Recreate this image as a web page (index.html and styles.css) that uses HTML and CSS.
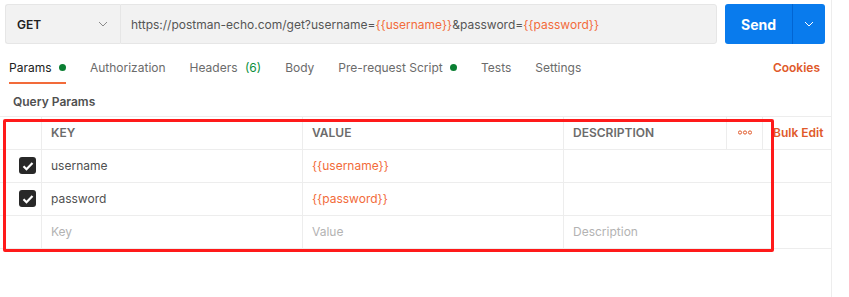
FILE: index.html
```html
<!DOCTYPE html>
<html>
<head>
    <title>Postman request</title>
    <link rel="stylesheet" href="styles.css">
</head>
<body>
<div class="pane">
    <div class="request-bar">
        <div class="method">
            <span>GET</span>
            <svg width="10" height="6" viewBox="0 0 10 6"><path d="M1 1l4 4 4-4" fill="none" stroke="#8a8a8a" stroke-width="1"/></svg>
        </div>
        <div class="url">https://postman-echo.com/get?username=<span class="var">{{username}}</span>&amp;password=<span class="var">{{password}}</span></div>
        <div class="send">
            <span class="send-txt">Send</span>
            <span class="send-more"><svg width="10" height="6" viewBox="0 0 10 6"><path d="M1 1l4 4 4-4" fill="none" stroke="#fff" stroke-width="1"/></svg></span>
        </div>
    </div>

    <div class="tabs">
        <span class="tab active">Params <i class="dot"></i></span>
        <span class="tab">Authorization</span>
        <span class="tab">Headers <em>(6)</em></span>
        <span class="tab">Body</span>
        <span class="tab">Pre-request Script <i class="dot"></i></span>
        <span class="tab">Tests</span>
        <span class="tab">Settings</span>
        <span class="cookies">Cookies</span>
    </div>

    <div class="section-tit">Query Params</div>

    <div class="params">
        <div class="row head">
            <div class="cell"></div>
            <div class="cell">KEY</div>
            <div class="cell">VALUE</div>
            <div class="cell">DESCRIPTION</div>
            <div class="cell more"><svg width="14" height="5" viewBox="0 0 14 5"><circle cx="2" cy="2.5" r="1.6"/><circle cx="7" cy="2.5" r="1.6"/><circle cx="12" cy="2.5" r="1.6"/></svg></div>
            <div class="cell bulk">Bulk Edit</div>
        </div>
        <div class="row">
            <div class="cell ck"><span class="box"><svg width="12" height="10" viewBox="0 0 12 10"><path d="M1.5 5.2l3 3 6-6.2" fill="none" stroke="#fff" stroke-width="2.2"/></svg></span></div>
            <div class="cell">username</div>
            <div class="cell var">{{username}}</div>
            <div class="cell"></div>
        </div>
        <div class="row">
            <div class="cell ck"><span class="box"><svg width="12" height="10" viewBox="0 0 12 10"><path d="M1.5 5.2l3 3 6-6.2" fill="none" stroke="#fff" stroke-width="2.2"/></svg></span></div>
            <div class="cell">password</div>
            <div class="cell var">{{password}}</div>
            <div class="cell"></div>
        </div>
        <div class="row">
            <div class="cell"></div>
            <div class="cell ph">Key</div>
            <div class="cell ph">Value</div>
            <div class="cell ph">Description</div>
        </div>
        <div class="mark"></div>
    </div>
</div>
</body>
</html>
```

FILE: styles.css
```css
body{ margin: 0;background: #FFF;font-family: Inter, "Open Sans", sans-serif;font-size: 12px;color: #505050;}
.pane{ width: 832px;height: 297px;border-right: solid 1px #EDEDED;box-sizing: border-box;}
.request-bar{ display: flex;padding: 4px 0 0 5px;height: 40px;}
.method{ width: 115px;box-sizing: border-box;display: flex;align-items: center;justify-content: space-between;padding: 0 12px 0 11px;background: #F2F2F2;border: solid 1px #E6E6E6;border-right: none;border-radius: 3px 0 0 3px;}
.method span{ font-weight: 600;font-size: 12px;color: #212121;}
.url{ width: 597px;box-sizing: border-box;display: flex;align-items: center;padding-left: 10px;background: #F2F2F2;border: solid 1px #E6E6E6;border-radius: 0 3px 3px 0;color: #555;white-space: pre;}
.var{ color: #F26B3A;}
.send{ margin-left: 8px;width: 100px;display: flex;background: #097BED;border-radius: 3px;color: #FFF;}
.send-txt{ width: 67px;display: flex;align-items: center;justify-content: center;font-weight: 700;font-size: 14px;border-right: solid 1px #0265D2;}
.send-more{ flex: 1;display: flex;align-items: center;justify-content: center;}
.tabs{ display: flex;align-items: stretch;height: 36px;margin-top: 4px;padding-left: 9px;}
.tab{ margin-right: 24px;color: #6B6B6B;box-sizing: border-box;display: flex;align-items: center;gap: 4px;white-space: pre;padding-top: 4px;border-bottom: solid 2px transparent;}
.tab.active{ color: #212121;border-bottom-color: #F26B3A;}
.tab em{ font-style: normal;color: #0A8F3C;}
.dot{ display: inline-block;width: 7px;height: 7px;border-radius: 50%;background: #0A7F32;}
.cookies{ margin-left: auto;margin-right: 11px;color: #E0592A;font-weight: 600;display: flex;align-items: center;padding-top: 2px;}
.section-tit{ padding: 10px 0 0 13px;height: 22px;font-size: 12px;font-weight: 600;color: #505050;}
.params{ position: relative;border-top: solid 1px #EDEDED;}
.row{ display: grid;grid-template-columns: 41px 261px 261px 269px;height: 33px;border-bottom: solid 1px #EDEDED;box-sizing: border-box;}
.row.head{ grid-template-columns: 41px 261px 261px 163px 36px 70px;height: 33px;}
.cell{ display: flex;align-items: center;padding: 0 0 1px 9px;border-left: solid 1px #EDEDED;color: #505050;}
.cell:first-child{ border-left: none;}
.head .cell{ font-size: 12px;font-weight: 600;color: #6B6B6B;}
.head .more{ padding-left: 0;justify-content: center;}
.more svg{ fill: none;stroke: #E0592A;stroke-width: 1;}
.head .bulk{ padding-left: 10px;color: #E0592A;font-size: 12px;}
.cell.var{ color: #F26B3A;}
.cell.ph{ color: #B3B3B3;}
.cell.ck{ padding-left: 19px;}
.box{ width: 17px;height: 17px;border-radius: 3px;background: #282828;display: flex;align-items: center;justify-content: center;}
.mark{ position: absolute;left: 3px;top: 2px;width: 771px;height: 133px;box-sizing: border-box;border: solid 3px #FF1A1A;border-radius: 2px;}
```
